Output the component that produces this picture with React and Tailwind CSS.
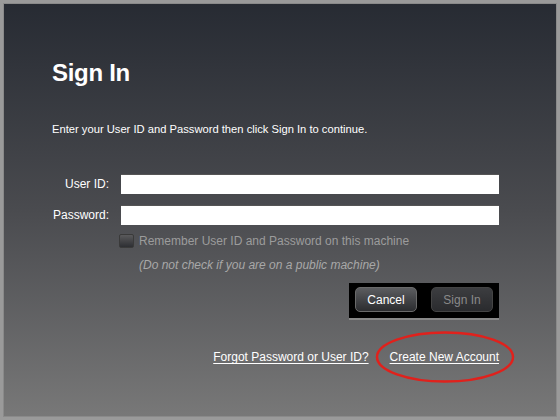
import React from "react";

const SignInPanel = () => {
  return (
    <div className="w-[560px] h-[420px] bg-[#9a9a9a] p-[3px] font-['Liberation_Sans',Arial,sans-serif]">
      <div className="w-full h-full bg-gradient-to-b from-[#272b33] via-[#4a4b4f] to-[#787878] border border-[#8a8a8a] pl-[48px] pr-[57px] pt-[55px] text-white">
        <h1 className="text-[24px] font-bold leading-[28px] tracking-[-0.3px]">Sign In</h1>

        <p className="mt-[34px] text-[11.2px] leading-[16px]">
          Enter your User ID and Password then click Sign In to continue.
        </p>

        <div className="mt-[37px] flex flex-col gap-[11px]">
          <div className="flex items-center">
            <label className="w-[57px] text-right text-[12px] leading-[16px]">User ID:</label>
            <input className="ml-[12px] flex-1 h-[20px] bg-white border-t border-[#555] outline-none" />
          </div>
          <div className="flex items-center">
            <label className="w-[57px] text-right text-[12px] leading-[16px]">Password:</label>
            <input
              type="password"
              className="ml-[12px] flex-1 h-[20px] bg-white border-t border-[#555] outline-none"
            />
          </div>
        </div>

        <div className="ml-[67px] mt-[8px] flex items-center h-[16px]">
          <span className="w-[15px] h-[14px] rounded-[2px] bg-gradient-to-b from-[#5a5a5c] to-[#2e2f33] border border-[#3a3a3a]" />
          <span className="ml-[5px] text-[12px] leading-[16px] text-[#9c9c9c]">
            Remember User ID and Password on this machine
          </span>
        </div>
        <p className="ml-[87px] mt-[8px] text-[12px] leading-[16px] italic text-[#a8a8a8]">
          (Do not check if you are on a public machine)
        </p>

        <div className="mt-[10px] flex justify-end">
          <div className="flex gap-[14px] bg-black px-[6px] pt-[4px] pb-[6px] border-b-2 border-[#888]">
            <button className="w-[62px] h-[25px] rounded-[5px] bg-gradient-to-b from-[#5c5d60] to-[#2c2d30] border border-[#6a6a6a] text-[12px] text-white">
              Cancel
            </button>
            <button className="w-[62px] h-[25px] rounded-[5px] bg-gradient-to-b from-[#3c3d40] to-[#2a2b2e] border border-[#444] text-[12px] text-[#8a8a8a]">
              Sign In
            </button>
          </div>
        </div>

        <div className="mt-[29px] flex justify-end gap-[21px] text-[12px] leading-[16px]">
          <a className="underline underline-offset-2">Forgot Password or User ID?</a>
          <span className="relative">
            <a className="underline underline-offset-2">Create New Account</a>
            <svg
              className="absolute left-[-15px] top-[-18px]"
              width="140"
              height="52"
              viewBox="0 0 140 52"
            >
              <ellipse cx="70" cy="26" rx="68" ry="24.5" fill="none" stroke="#e0211c" strokeWidth="2.5" />
            </svg>
          </span>
        </div>
      </div>
    </div>
  );
};

export default SignInPanel;
